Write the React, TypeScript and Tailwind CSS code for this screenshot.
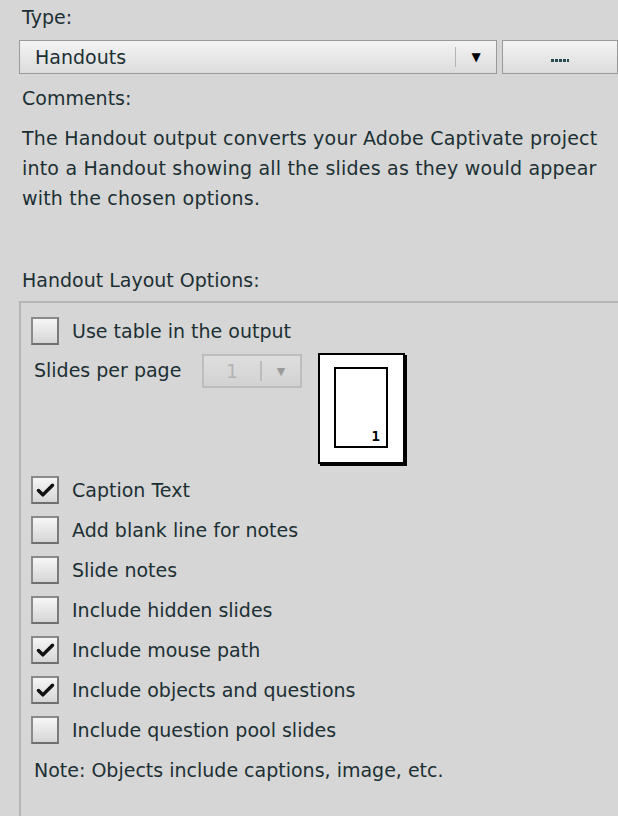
import { Check } from "lucide-react";

const options = [
  { label: "Caption Text", checked: true },
  { label: "Add blank line for notes", checked: false },
  { label: "Slide notes", checked: false },
  { label: "Include hidden slides", checked: false },
  { label: "Include mouse path", checked: true },
  { label: "Include objects and questions", checked: true },
  { label: "Include question pool slides", checked: false },
];

function Box({ checked }: { checked: boolean }) {
  return (
    <span className="grid h-[28px] w-[28px] shrink-0 place-items-center border-2 border-[#8a8a8a] border-b-[#6e6e6e] border-r-[#7a7a7a] bg-gradient-to-b from-[#f6f6f6] to-[#d6d6d6]">
      {checked && <Check size={21} strokeWidth={4} className="text-[#111]" />}
    </span>
  );
}

export default function App() {
  return (
    <div
      className="h-[816px] w-[618px] overflow-hidden bg-[#d6d6d6] text-[19px] leading-none text-[#1c3034]"
      style={{ fontFamily: '"DejaVu Sans", Verdana, sans-serif' }}
    >
      <div className="pl-[22px] pt-[8px]">Type:</div>

      <div className="mt-[13px] flex h-[34px] gap-[5px] pl-[19px]">
        <div className="flex flex-1 items-center border border-[#9a9a9a] bg-gradient-to-b from-[#f4f4f4] to-[#dcdcdc] pl-[15px]">
          <span className="flex-1">Handouts</span>
          <span className="h-[20px] w-px bg-[#b4b4b4]" />
          <span className="w-[40px] text-center text-[12px] text-black">▼</span>
        </div>
        <div className="flex w-[116px] items-center justify-center border border-[#9a9a9a] bg-gradient-to-b from-[#f4f4f4] to-[#dcdcdc]">
          <span className="mt-[6px] h-[3px] w-[18px] bg-[repeating-linear-gradient(90deg,#2b4a50_0_3px,transparent_3px_4px)]" />
        </div>
      </div>

      <div className="pl-[22px] pt-[15px]">Comments:</div>

      <p className="pl-[22px] pr-[4px] pt-[15px] leading-[30px] tracking-[0.2px]">
        The Handout output converts your Adobe Captivate project into a Handout showing all the slides as they would appear
        with the chosen options.
      </p>

      <div className="pl-[22px] pt-[58px]">Handout Layout Options:</div>

      <div className="ml-[19px] mt-[11px] h-[600px] border-l-2 border-t-2 border-[#b6b6b6] pl-[10px] pt-[14px]">
        <div className="flex items-center gap-[13px]">
          <Box checked={false} />
          <span>Use table in the output</span>
        </div>

        <div className="mt-[8px] flex items-start">
          <span className="mt-[8px] w-[171px] pl-[3px]">Slides per page</span>
          <div className="mt-px flex h-[34px] w-[100px] items-center border-2 border-[#bdbdbd] bg-gradient-to-b from-[#dedede] to-[#d2d2d2] text-[#b4b4b4]">
            <span className="w-[56px] text-center">1</span>
            <span className="h-[20px] w-[2px] bg-[#bcbcbc]" />
            <span className="flex-1 text-center text-[11px] text-[#9a9a9a]">▼</span>
          </div>
          <div className="ml-[16px] flex h-[111px] w-[87px] border-2 border-black bg-white p-[12px] pl-[14px] shadow-[2px_2px_0_#000]">
            <div
              className="flex h-[81px] w-[54px] items-end justify-end border-2 border-black bg-white pb-[3px] pr-[6px] text-[14px] font-bold text-black"
              style={{ fontFamily: '"DejaVu Sans Mono", monospace' }}
            >
              1
            </div>
          </div>
        </div>

        <div className="mt-[12px] flex flex-col gap-[12px]">
          {options.map((o) => (
            <div key={o.label} className="flex items-center gap-[13px]">
              <Box checked={o.checked} />
              <span>{o.label}</span>
            </div>
          ))}
        </div>

        <div className="pl-[3px] pt-[17px]">Note: Objects include captions, image, etc.</div>
      </div>
    </div>
  );
}
